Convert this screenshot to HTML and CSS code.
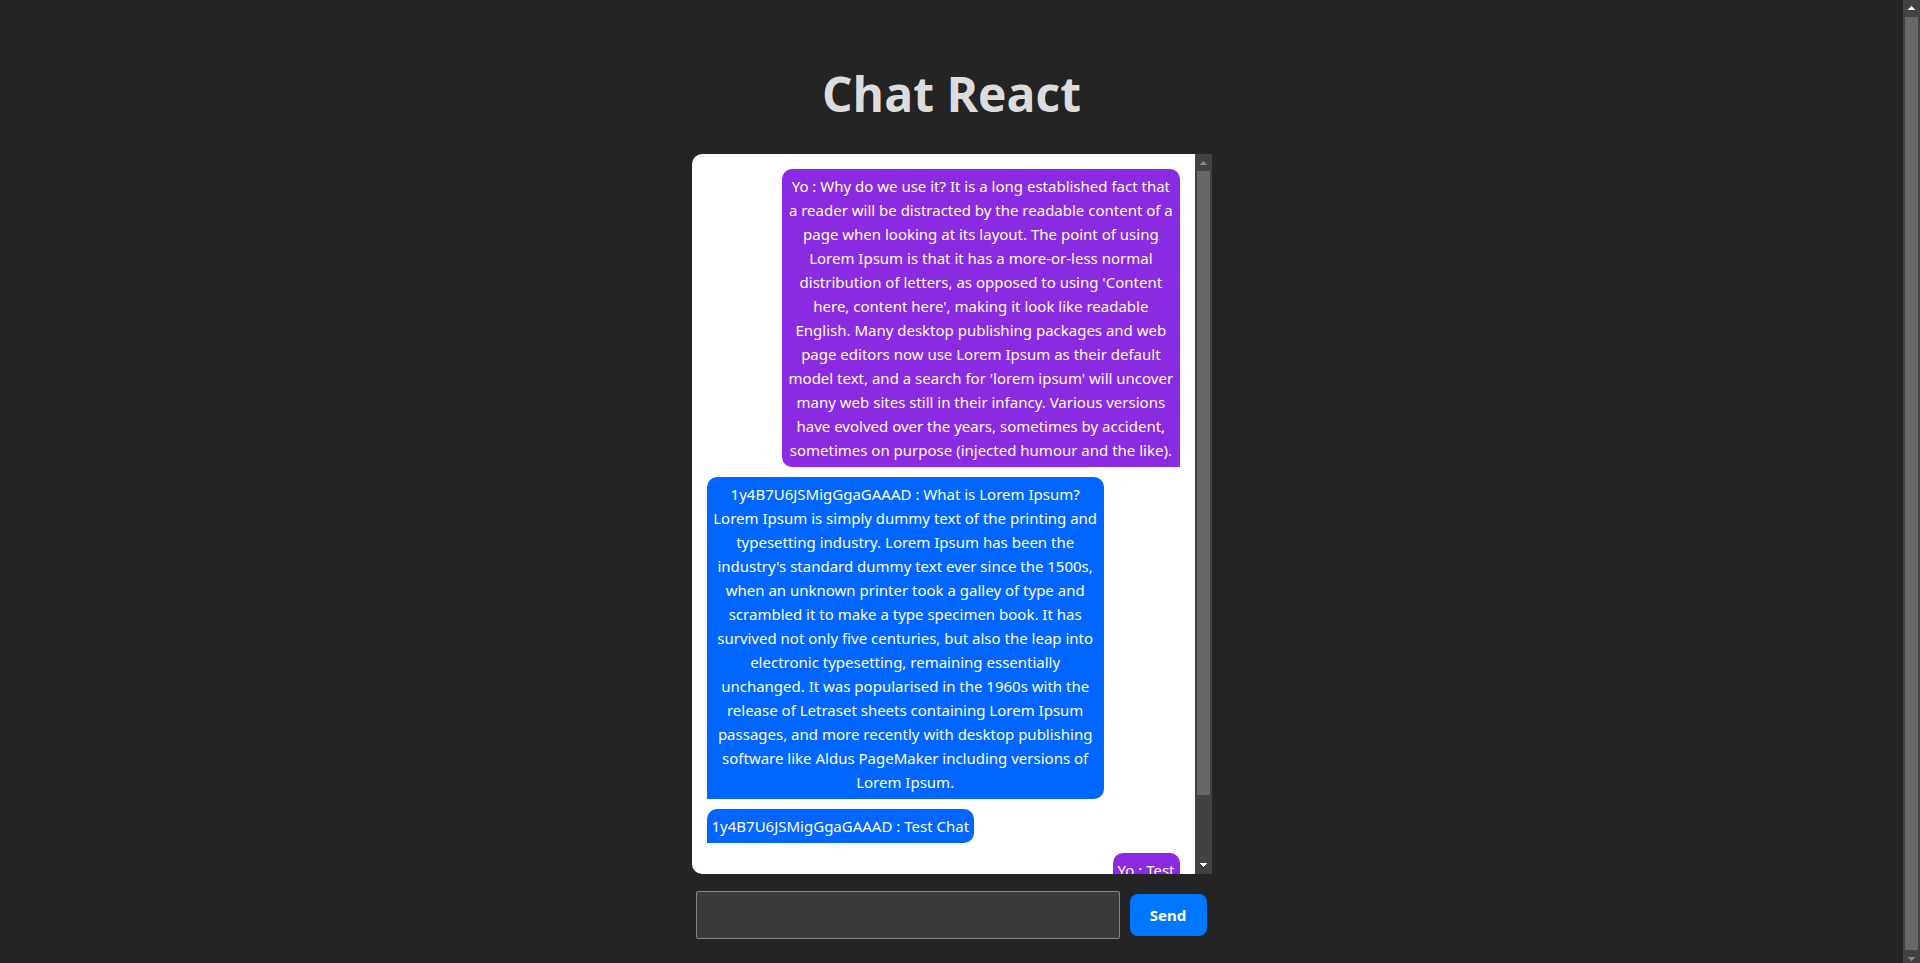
FILE: index.html
```html
<!DOCTYPE html>
<html lang="en">
<head>
<meta charset="utf-8">
<title>Chat React</title>
<link rel="stylesheet" href="styles.css">
</head>
<body>
<main class="app">
  <h1 class="title">Chat React</h1>
  <section class="chat">
    <div class="chat-window">
      <ul class="messages">
        <li class="message long mine">Yo : Why do we use it? It is a long established fact that<br>a reader will be distracted by the readable content of a<br>page when looking at its layout. The point of using<br>Lorem Ipsum is that it has a more-or-less normal<br>distribution of letters, as opposed to using 'Content<br>here, content here', making it look like readable<br>English. Many desktop publishing packages and web<br>page editors now use Lorem Ipsum as their default<br>model text, and a search for 'lorem ipsum' will uncover<br>many web sites still in their infancy. Various versions<br>have evolved over the years, sometimes by accident,<br>sometimes on purpose (injected humour and the like).</li>
        <li class="message long">1y4B7U6JSMigGgaGAAAD : What is Lorem Ipsum?<br>Lorem Ipsum is simply dummy text of the printing and<br>typesetting industry. Lorem Ipsum has been the<br>industry's standard dummy text ever since the 1500s,<br>when an unknown printer took a galley of type and<br>scrambled it to make a type specimen book. It has<br>survived not only five centuries, but also the leap into<br>electronic typesetting, remaining essentially<br>unchanged. It was popularised in the 1960s with the<br>release of Letraset sheets containing Lorem Ipsum<br>passages, and more recently with desktop publishing<br>software like Aldus PageMaker including versions of<br>Lorem Ipsum.</li>
        <li class="message">1y4B7U6JSMigGgaGAAAD : Test Chat</li>
        <li class="message mine">Yo : Test</li>
      </ul>
      <div class="scrollbar" aria-hidden="true">
        <svg class="arrow dim" viewBox="0 0 17 17"><path d="M8 7h1v1h1v1h1v1h1v1H5v-1h1V9h1V8h1z"/></svg>
        <div class="track"><div class="thumb chat-thumb"></div></div>
        <svg class="arrow" viewBox="0 0 17 17"><path d="M5 6h7v1h-1v1h-1v1H9v1H8V9H7V8H6V7H5z"/></svg>
      </div>
    </div>
    <form class="composer">
      <input class="field" type="text" aria-label="Message">
      <button class="send" type="button">Send</button>
    </form>
  </section>
</main>
<div class="scrollbar page-scrollbar" aria-hidden="true">
  <svg class="arrow" viewBox="0 0 17 17"><path d="M8 6h1v1h1v1h1v1h1v1H5V9h1V8h1V7h1z"/></svg>
  <div class="track"><div class="thumb page-thumb"></div></div>
  <svg class="arrow dim" viewBox="0 0 17 17"><path d="M5 7h7v1h-1v1h-1v1H9v1H8v-1H7V9H6V8H5z"/></svg>
</div>
</body>
</html>
```
FILE: styles.css
```css
* {
  box-sizing: border-box;
}

body {
  margin: 0;
  height: 100vh;
  display: flex;
  overflow: hidden;
  background: #242424;
  color: rgba(255, 255, 255, 0.87);
  font-family: "Noto Sans", "Open Sans", sans-serif;
  font-size: 15px;
  line-height: 24px;
}

.app {
  flex: 1;
  display: flex;
  flex-direction: column;
  align-items: center;
  padding: 66px 32px 0;
}

.title {
  margin: 0 0 32px;
  font-family: "Open Sans", "Noto Sans", sans-serif;
  font-size: 48px;
  line-height: 56px;
  font-weight: 700;
}

.chat {
  width: 100%;
  max-width: 520px;
}

.chat-window {
  display: flex;
  height: 720px;
  border-radius: 10px 0 0 10px;
  overflow: hidden;
  background: #fff;
}

.messages {
  flex: 1;
  display: flex;
  flex-direction: column;
  align-items: flex-start;
  gap: 10px;
  margin: 0;
  padding: 15px;
  list-style: none;
  overflow: hidden;
}

.message {
  flex: none;
  padding: 5px;
  border-radius: 10px 10px 10px 0;
  background: #06f;
  color: #fff;
  text-align: center;
}

.long {
  width: 84%;
  padding: 5px 0;
}

.mine {
  align-self: flex-end;
  border-radius: 10px 10px 0 10px;
  background: #8a2be2;
}

.scrollbar {
  flex: none;
  width: 17px;
  display: flex;
  flex-direction: column;
  background: #424242;
}

.page-scrollbar {
  margin-bottom: -4px;
}

.arrow {
  flex: none;
  width: 17px;
  height: 17px;
  fill: #fff;
  shape-rendering: crispEdges;
}

.dim {
  fill: #868686;
}

.track {
  flex: 1;
  padding: 0 2px;
}

.thumb {
  background: #686868;
}

.chat-thumb {
  height: 91%;
}

.page-thumb {
  height: 100%;
}

.composer {
  display: flex;
  align-items: center;
  gap: 10px;
  padding: 17px 5px 0 4px;
}

.field {
  flex: 1;
  min-width: 0;
  height: 48px;
  padding: 0 10px;
  border: 1px solid #858585;
  border-radius: 2px;
  background: #3b3b3b;
  color: #fff;
  font: inherit;
}

.send {
  width: 77px;
  height: 42px;
  padding: 0;
  border: 0;
  border-radius: 8px;
  background: #07f;
  color: #fff;
  font: inherit;
  font-weight: 700;
}
```
